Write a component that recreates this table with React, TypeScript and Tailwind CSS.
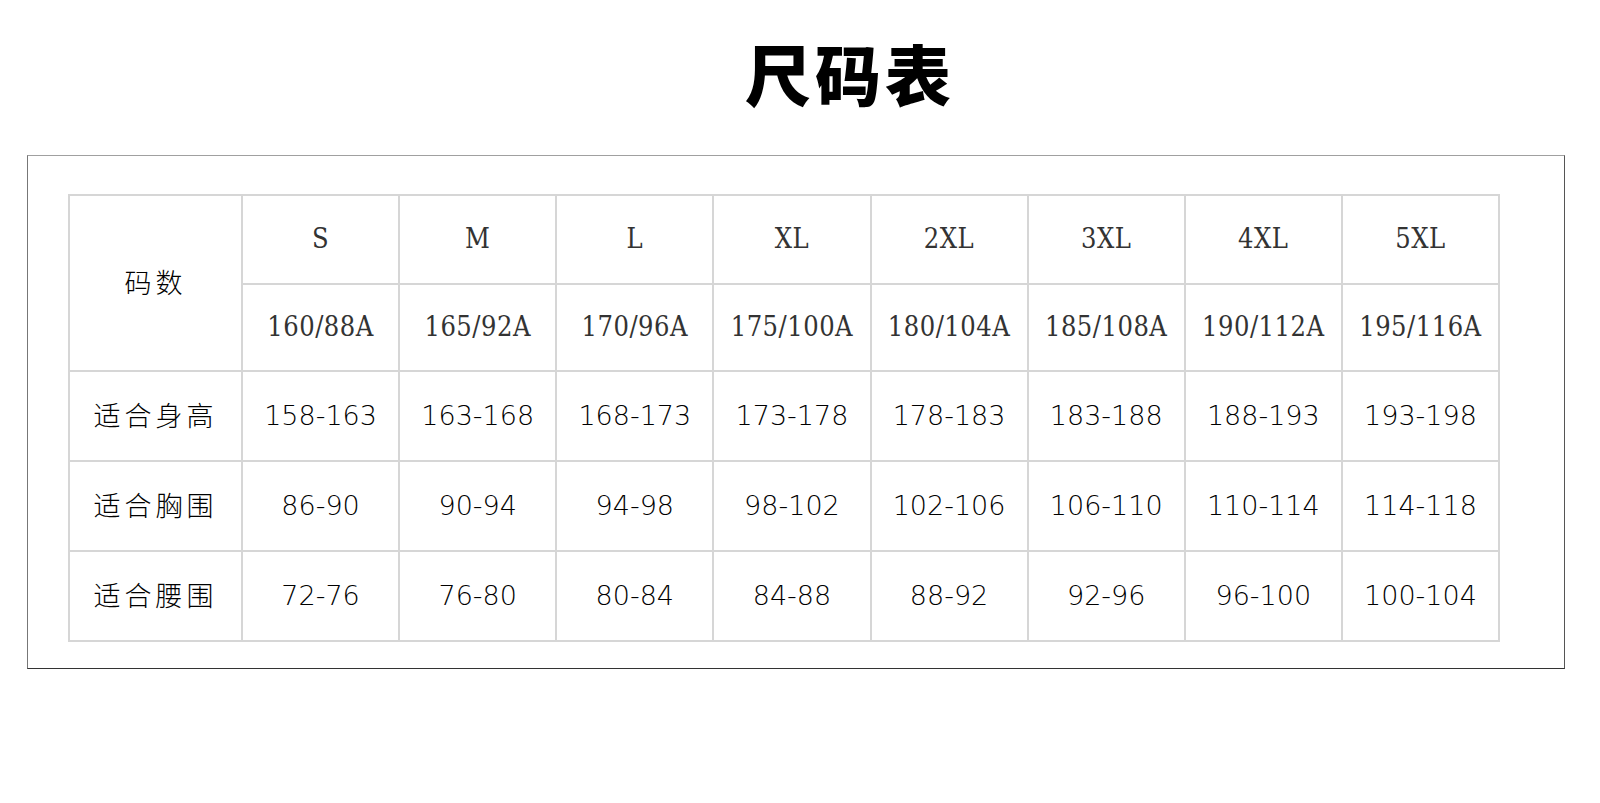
const sizes = ["S", "M", "L", "XL", "2XL", "3XL", "4XL", "5XL"];
const codes = ["160/88A", "165/92A", "170/96A", "175/100A", "180/104A", "185/108A", "190/112A", "195/116A"];

const rows = [
  { label: "适合身高", values: ["158-163", "163-168", "168-173", "173-178", "178-183", "183-188", "188-193", "193-198"] },
  { label: "适合胸围", values: ["86-90", "90-94", "94-98", "98-102", "102-106", "106-110", "110-114", "114-118"] },
  { label: "适合腰围", values: ["72-76", "76-80", "80-84", "84-88", "88-92", "92-96", "96-100", "100-104"] },
];

const cell = "border-2 border-[#d6d6d6] text-center align-middle p-0";
const serif = "font-['DejaVu_Serif',serif] font-stretch-condensed font-light text-[27px] tracking-[0.5px] leading-none text-[#333]";
const num = "font-['DejaVu_Sans',sans-serif] font-light text-[27px] leading-none text-black";
const cjk = "font-['Noto_Sans_CJK_SC',sans-serif] font-light text-[27px] tracking-[4px] leading-none text-black";

export default function App() {
  return (
    <div className="w-[1600px] h-[803px] bg-white overflow-hidden">
      <div className="pt-[39px] pl-[100px] flex justify-center">
        <h1 className="font-['Noto_Sans_CJK_SC',sans-serif] font-black text-[66px] leading-none tracking-[4px] text-black h-[69px]">
          尺码表
        </h1>
      </div>

      <div className="mt-[47px] ml-[27px] w-[1538px] h-[514px] border border-t-[#a0a0a0] border-l-[#777] border-r-[#555] border-b-[#333] pt-[38px] pl-[40px]">
        <table className="table-fixed border-collapse w-[1432px]">
          <colgroup>
            <col className="w-[173px]" />
            {sizes.map((s) => (
              <col key={s} />
            ))}
          </colgroup>
          <tbody>
            <tr className="h-[89px]">
              <td rowSpan={2} className={cell}>
                <span className={cjk}>码数</span>
              </td>
              {sizes.map((s) => (
                <td key={s} className={cell}>
                  <span className={serif}>{s}</span>
                </td>
              ))}
            </tr>
            <tr className="h-[87px]">
              {codes.map((c) => (
                <td key={c} className={cell}>
                  <span className={serif}>{c}</span>
                </td>
              ))}
            </tr>
            {rows.map((r) => (
              <tr key={r.label} className="h-[90px]">
                <td className={cell}>
                  <span className={cjk}>{r.label}</span>
                </td>
                {r.values.map((v) => (
                  <td key={v} className={cell}>
                    <span className={num}>{v}</span>
                  </td>
                ))}
              </tr>
            ))}
          </tbody>
        </table>
      </div>
    </div>
  );
}
